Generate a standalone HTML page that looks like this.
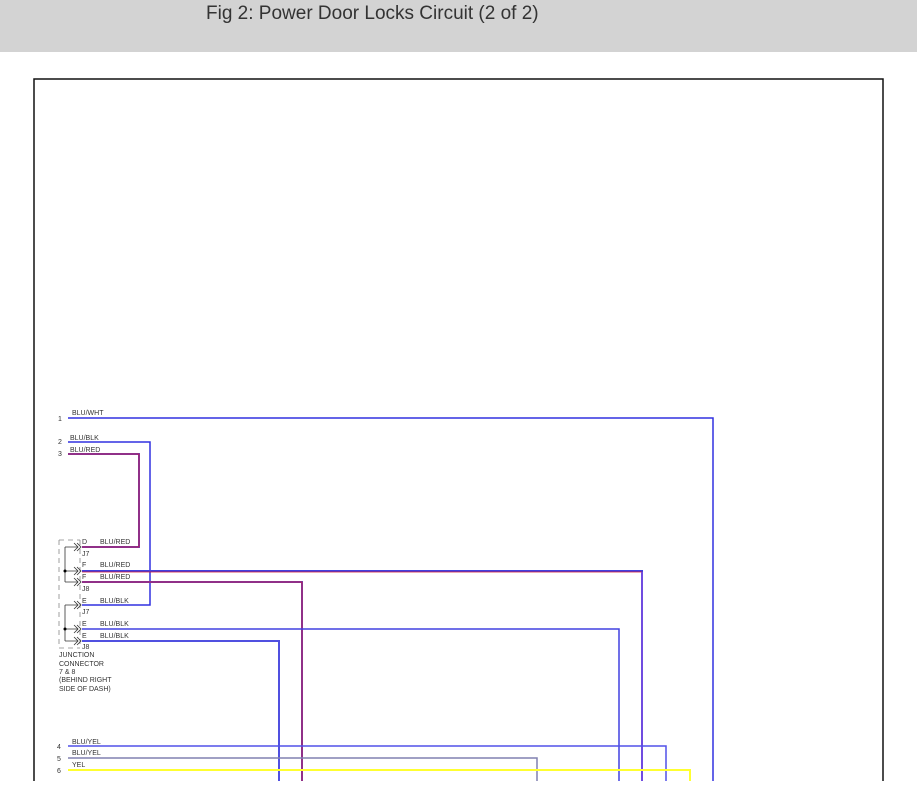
<!DOCTYPE html>
<html><head><meta charset="utf-8"><style>
body{margin:0;width:917px;height:801px;overflow:hidden;background:#fff;font-family:"Liberation Sans",sans-serif}
.hd{position:absolute;left:0;top:0;width:917px;height:52px;background:#d3d3d3}
.hd span{position:absolute;left:206px;top:3px;font-size:19px;color:#333;letter-spacing:0px}
svg{position:absolute;left:0;top:0}
text{font-family:"Liberation Sans",sans-serif;font-size:7px;fill:#333}
</style></head><body>
<div class="hd"><span>Fig 2: Power Door Locks Circuit (2 of 2)</span></div>
<svg width="917" height="801">
<path d="M34 781V79H883V781" fill="none" stroke="#111" stroke-width="1.5"/>
<g fill="none" stroke-width="1.5">
<path d="M68 418H713V781" stroke="#3030e0"/>
<path d="M68 442H150V605H82" stroke="#3030e0"/>
<path d="M68 454H139V547H82" stroke="#5050e0" stroke-width="2"/>
<path d="M68 454H139V547H82" stroke="#d01030" stroke-width="1"/>
<path d="M82 571H642V781" stroke="#4040e0" stroke-width="2"/>
<path d="M82 572H642" stroke="#d01030" stroke-width="0.8"/>
<path d="M642 572V781" stroke="#8050e0" stroke-width="1.5"/>
<path d="M82 582H302V781" stroke="#5050e0" stroke-width="2"/>
<path d="M82 582H302V781" stroke="#d01030" stroke-width="1"/>
<path d="M82 629H619V781" stroke="#4040e0"/>
<path d="M82 641H279V781" stroke="#5050e0" stroke-width="2"/>
<path d="M68 746H666V781" stroke="#5050e8"/>
<path d="M68 758H537V781" stroke="#8080b0"/>
<path d="M68 770H690V781" stroke="#ffff30" stroke-width="2"/>
<path d="M59 540H80M59 648H80M59 540V648M80 540V648" stroke="#888" stroke-width="0.8" stroke-dasharray="5,4"/>
<path d="M65 547V582M65 605V641M65 571H78M65 547H78M65 582H78M65 605H78M65 629H78M65 641H78" stroke="#333" stroke-width="0.8"/>
<path d="M74 543L78 547L74 551M77 543L81 547L77 551M74 567L78 571L74 575M77 567L81 571L77 575M74 578L78 582L74 586M77 578L81 582L77 586M74 601L78 605L74 609M77 601L81 605L77 609M74 625L78 629L74 633M77 625L81 629L77 633M74 637L78 641L74 645M77 637L81 641L77 645" stroke="#333" stroke-width="0.8"/>
</g>
<circle cx="65" cy="571" r="1.5" fill="#000"/><circle cx="65" cy="629" r="1.5" fill="#000"/>
<text x="58" y="421">1</text><text x="72" y="415">BLU/WHT</text>
<text x="58" y="444">2</text><text x="70" y="440">BLU/BLK</text>
<text x="58" y="456">3</text><text x="70" y="452">BLU/RED</text>
<text x="82" y="544">D</text><text x="100" y="544">BLU/RED</text><text x="82" y="556">J7</text>
<text x="82" y="567">F</text><text x="100" y="567">BLU/RED</text>
<text x="82" y="579">F</text><text x="100" y="579">BLU/RED</text><text x="82" y="591">J8</text>
<text x="82" y="603">E</text><text x="100" y="603">BLU/BLK</text><text x="82" y="614">J7</text>
<text x="82" y="626">E</text><text x="100" y="626">BLU/BLK</text>
<text x="82" y="638">E</text><text x="100" y="638">BLU/BLK</text><text x="82" y="649">J8</text>
<text x="59" y="657">JUNCTION</text><text x="59" y="666">CONNECTOR</text><text x="59" y="674">7 &amp; 8</text><text x="59" y="682">(BEHIND RIGHT</text><text x="59" y="691">SIDE OF DASH)</text>
<text x="57" y="749">4</text><text x="72" y="744">BLU/YEL</text>
<text x="57" y="761">5</text><text x="72" y="755">BLU/YEL</text>
<text x="57" y="773">6</text><text x="72" y="767">YEL</text>
</svg>
</body></html>
